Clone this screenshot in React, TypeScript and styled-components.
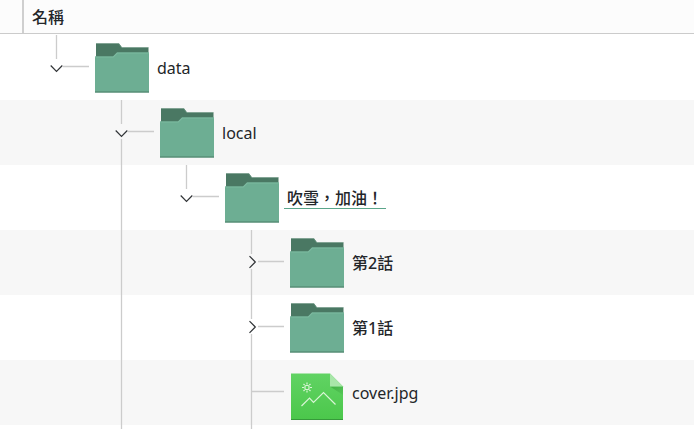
import React from "react";
import styled, { createGlobalStyle } from "styled-components";

const GlobalStyle = createGlobalStyle`
  * { box-sizing: border-box; }
  html, body { margin: 0; background: #ffffff; }
  body {
    overflow: hidden;
    color: #232629;
    font-family: "Noto Sans", "Noto Sans CJK TC", sans-serif;
    font-size: 16px;
    line-height: 24px;
  }
`;

const Page = styled.main`
  display: flex;
  flex-direction: column;
  height: 100vh;
  overflow: hidden;
`;

const Header = styled.header`
  display: flex;
  flex: none;
  height: 34px;
  margin-bottom: 1px;
  background: #fcfcfc;
  border-bottom: 1px solid #cbcbcb;
`;

const HeaderStub = styled.div`
  width: 24px;
  border-right: 2px solid #cfcfcf;
`;

const HeaderTitle = styled.div`
  display: flex;
  align-items: center;
  flex: 1;
  padding: 0 8px;
  font-weight: 500;
`;

const Tree = styled.div`
  display: flex;
  flex: 1;
  flex-direction: column;
`;

const Row = styled.div<{ $shaded: boolean }>`
  display: flex;
  flex: none;
  height: 65px;
  padding-left: 24px;
  background: ${(p) => (p.$shaded ? "#f7f7f7" : "#ffffff")};
`;

const Guide = styled.div`
  flex: none;
  width: 65px;
  height: 65px;
`;

const Toggle = styled.button`
  display: block;
  flex: none;
  width: 65px;
  height: 65px;
  padding: 0;
  border: 0;
  background: none;
`;

const Drawing = styled.svg`
  display: block;
  flex: none;
`;

const Name = styled.span<{ $active?: boolean; $cjk?: boolean }>`
  align-self: flex-start;
  margin-top: 21px;
  padding: 0 3px;
  height: 23px;
  font-weight: ${(p) => (p.$cjk ? 500 : 400)};
  white-space: nowrap;
  border-bottom: 1px solid ${(p) => (p.$active ? "#5aa58a" : "transparent")};
`;

type GuideKind = "blank" | "through" | "leaf" | "open" | "openLast" | "closed";

const segments: Record<GuideKind, string> = {
  blank: "",
  through: "M32.5 0V65",
  leaf: "M32.5 0V65M33 31.5H65",
  open: "M32.5 0V24M32.5 39V65M39 31.5H65",
  openLast: "M32.5 0V24M39 31.5H65",
  closed: "M32.5 0V24M32.5 39V65M39 31.5H65",
};

function Connector({ kind }: { kind: GuideKind }) {
  return (
    <Drawing width="65" height="65" viewBox="0 0 65 65" fill="none" aria-hidden="true">
      <path d={segments[kind]} stroke="#cccccc" strokeWidth="1.3" />
      {(kind === "open" || kind === "openLast") && (
        <path d="M26.7 30.5L32.5 36.3L38.3 30.5" stroke="#303336" strokeWidth="1.2" />
      )}
      {kind === "closed" && (
        <path d="M30.5 26.2L36.3 32L30.5 37.8" stroke="#303336" strokeWidth="1.2" />
      )}
    </Drawing>
  );
}

function FolderIcon() {
  return (
    <Drawing width="65" height="65" viewBox="0 0 65 65" aria-hidden="true">
      <path d="M7 8.5H30L33 12.5H59.5V24H7Z" fill="#4a7863" />
      <path d="M7 8.5H30L33 12.5H59.5V13H32.5L29.5 9H7Z" fill="#63907b" />
      <path d="M6 21.5H24L28 17.5H60V57.5H6Z" fill="#6dae93" />
      <path d="M6 21.5H24L28 17.5H60V18.5H28.5L24.5 22.5H6Z" fill="#7db9a0" />
      <path d="M6 56.5H60V57.5H6Z" fill="#4c7e68" />
    </Drawing>
  );
}

function ImageIcon() {
  return (
    <Drawing width="65" height="65" viewBox="0 0 65 65" aria-hidden="true">
      <defs>
        <linearGradient id="imageBody" x1="0" y1="1" x2="0" y2="0">
          <stop offset="0" stopColor="#4bc74b" />
          <stop offset="1" stopColor="#61d363" />
        </linearGradient>
        <linearGradient id="foldShade" x1="0" y1="0" x2="1" y2="1">
          <stop offset="0" stopColor="#359b39" stopOpacity="0.65" />
          <stop offset="1" stopColor="#359b39" stopOpacity="0.1" />
        </linearGradient>
      </defs>
      <path d="M7 13.5H46L59 26.5V60H7Z" fill="url(#imageBody)" />
      <path d="M46 26.5H59V35Z" fill="url(#foldShade)" />
      <path d="M46 13.5L59 26.5H46Z" fill="#a8e6a9" />
      <path d="M7 59H59V60H7Z" fill="#369a3a" />
      <g fill="none" stroke="#d9f5d5" strokeWidth="1.2">
        <rect x="21" y="25.5" width="4" height="4" rx="1" />
        <path d="M23 22.5V24.5M23 30.5V32.5M18 27.5H20M26 27.5H28M19.5 24L20.7 25.2M25.3 29.8L26.5 31M26.5 24L25.3 25.2M20.7 29.8L19.5 31" />
        <path d="M17.5 46L25.5 38L29.5 42.5L39.5 32.5L51.5 44.5" />
      </g>
    </Drawing>
  );
}

interface Entry {
  name: string;
  guides: GuideKind[];
  image?: boolean;
  active?: boolean;
  cjk?: boolean;
}

const entries: Entry[] = [
  { name: "data", guides: ["openLast"] },
  { name: "local", guides: ["blank", "open"] },
  { name: "吹雪，加油！", guides: ["blank", "through", "openLast"], active: true, cjk: true },
  { name: "第2話", guides: ["blank", "through", "blank", "closed"], cjk: true },
  { name: "第1話", guides: ["blank", "through", "blank", "closed"], cjk: true },
  { name: "cover.jpg", guides: ["blank", "through", "blank", "leaf"], image: true },
];

const trailing: GuideKind[] = ["blank", "through", "blank", "through"];

const expandable = (kind: GuideKind) => kind === "open" || kind === "openLast" || kind === "closed";

export default function App() {
  return (
    <Page lang="zh-Hant">
      <GlobalStyle />
      <Header>
        <HeaderStub />
        <HeaderTitle>名稱</HeaderTitle>
      </Header>
      <Tree role="tree" aria-label="名稱">
        {entries.map((entry, index) => (
          <Row
            key={entry.name}
            role="treeitem"
            aria-level={entry.guides.length}
            aria-selected={!!entry.active}
            $shaded={index % 2 === 1}
          >
            {entry.guides.map((kind, level) =>
              expandable(kind) ? (
                <Toggle key={level} type="button" aria-label={entry.name} aria-expanded={kind !== "closed"}>
                  <Connector kind={kind} />
                </Toggle>
              ) : (
                <Guide key={level}>
                  <Connector kind={kind} />
                </Guide>
              )
            )}
            {entry.image ? <ImageIcon /> : <FolderIcon />}
            <Name $active={entry.active} $cjk={entry.cjk}>
              {entry.name}
            </Name>
          </Row>
        ))}
        <Row $shaded={false} aria-hidden="true">
          {trailing.map((kind, level) => (
            <Guide key={level}>
              <Connector kind={kind} />
            </Guide>
          ))}
        </Row>
      </Tree>
    </Page>
  );
}
